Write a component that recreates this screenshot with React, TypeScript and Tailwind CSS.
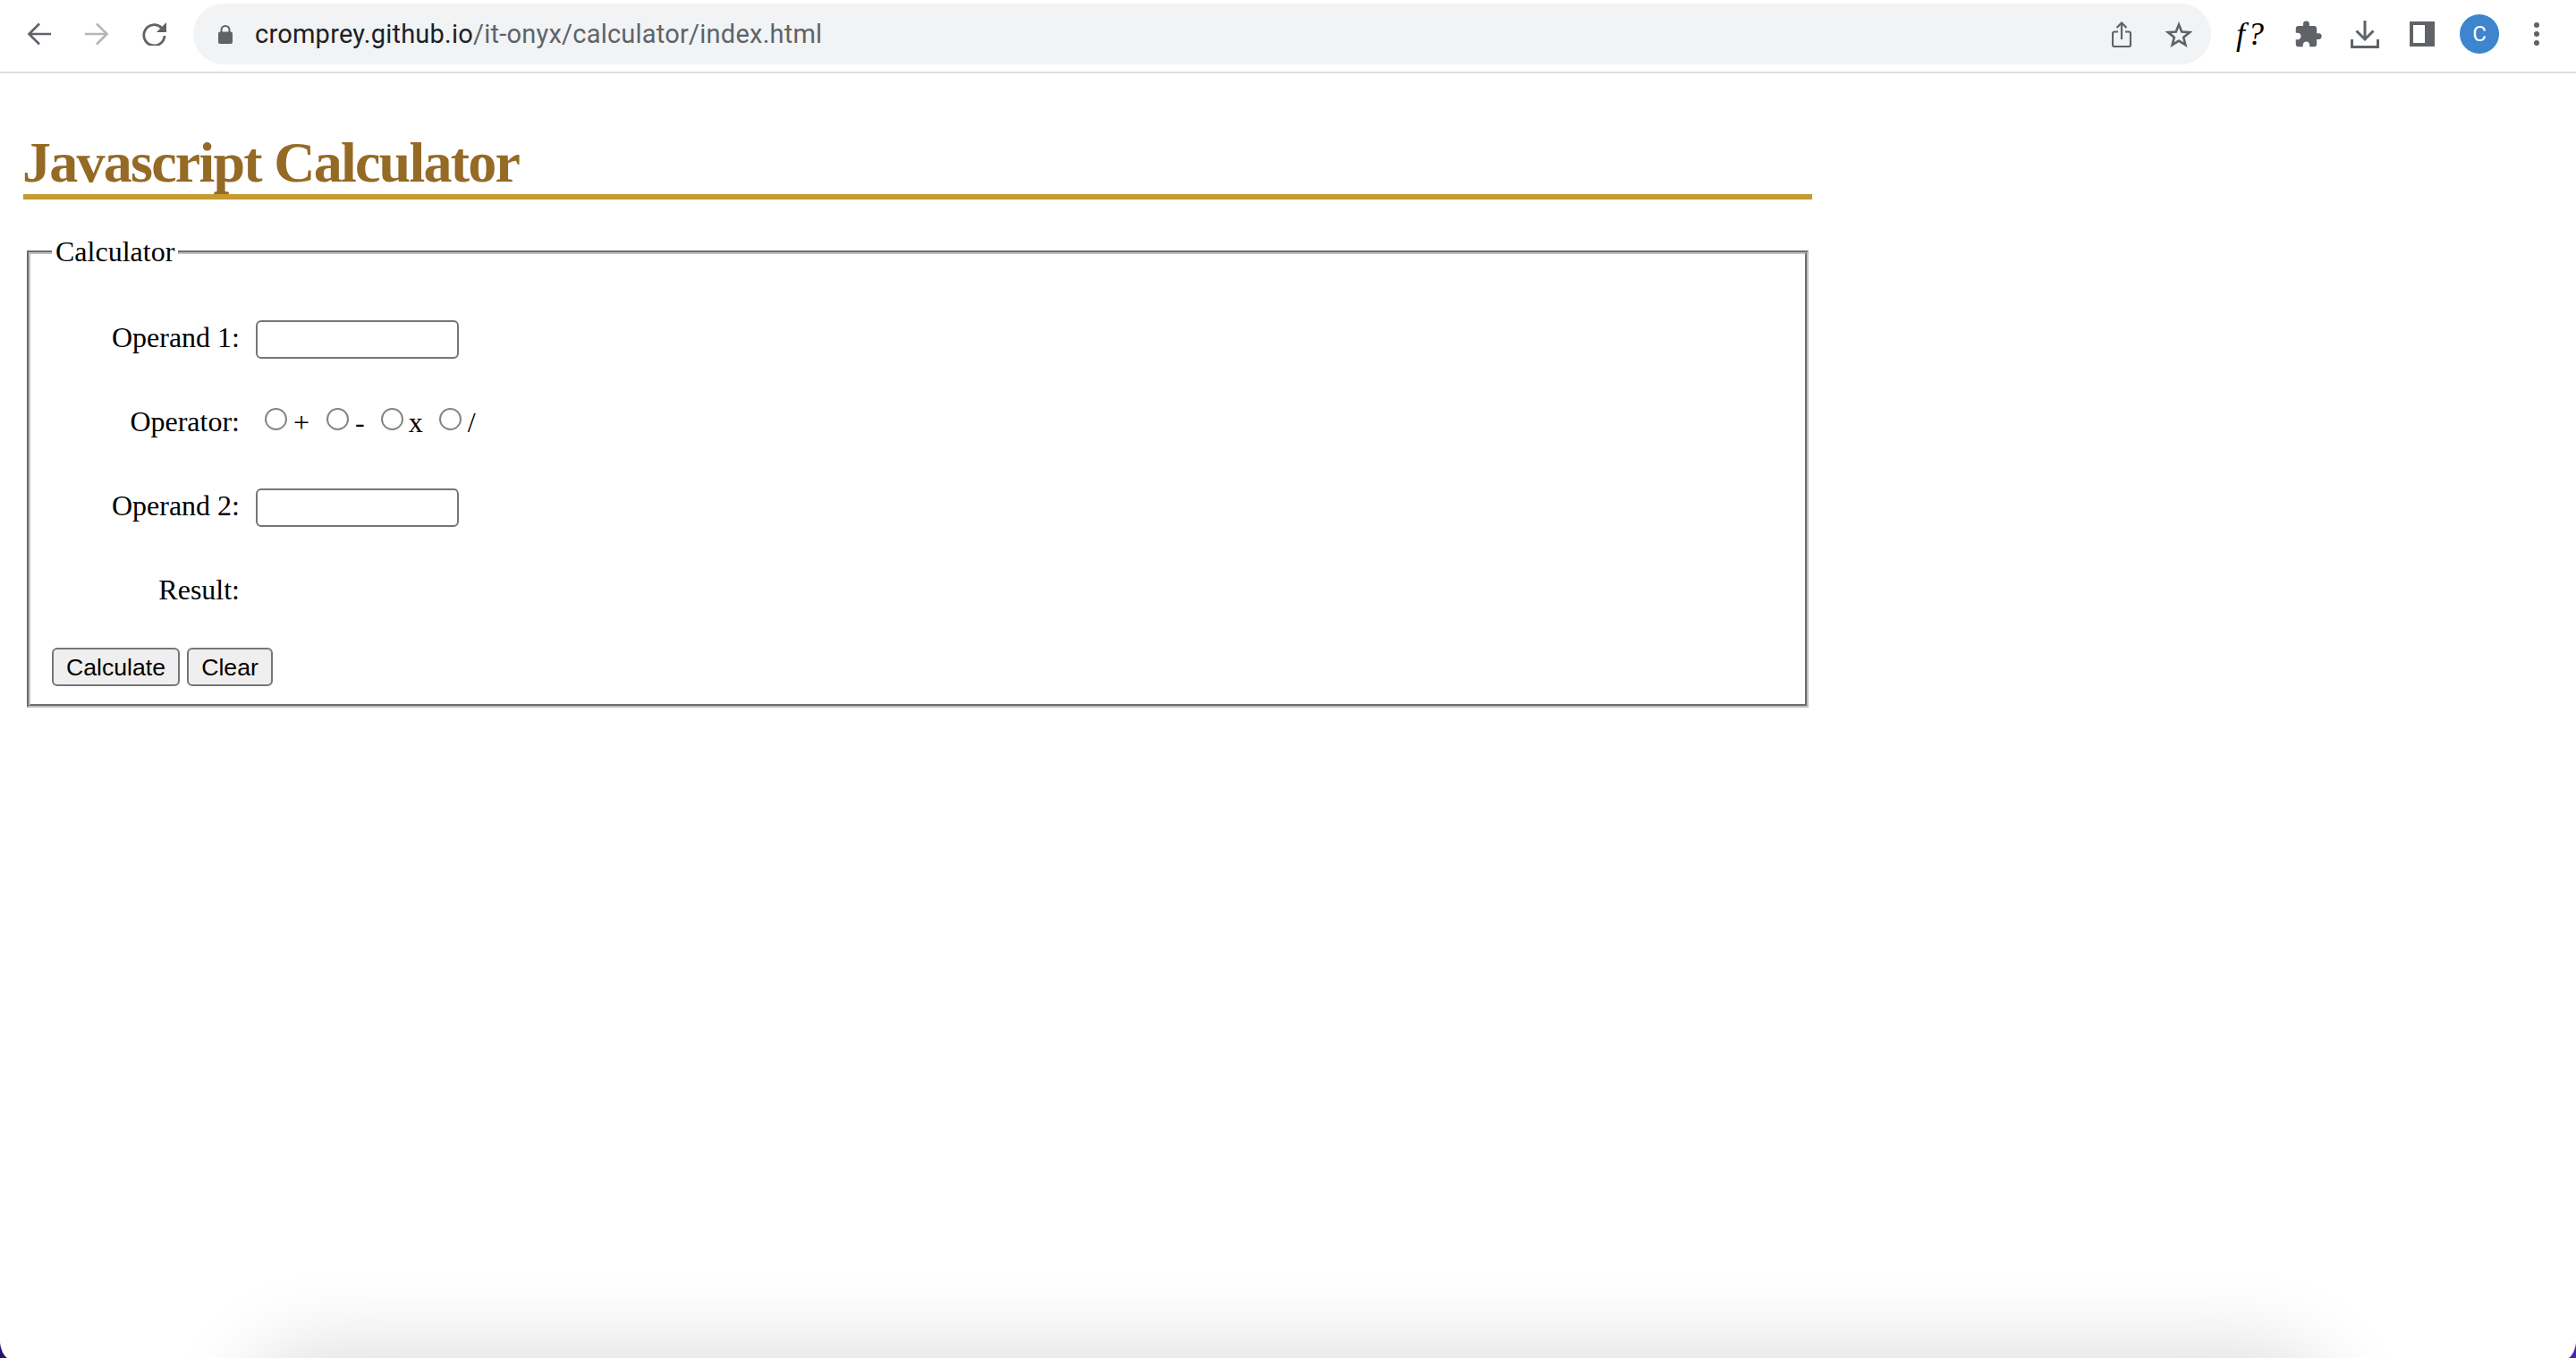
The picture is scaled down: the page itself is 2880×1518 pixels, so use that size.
import React from 'react';
import { MdExtension } from 'react-icons/md';

const operators = [
  { op: '+', cls: 'ml-[10px] mr-[7px]' },
  { op: '-', cls: 'ml-[19px] mr-[7px]' },
  { op: 'x', cls: 'ml-[18px] mr-[6px]' },
  { op: '/', cls: 'ml-[18px] mr-[7px]' },
];

const Toolbar: React.FC = () => {
  return (
    <header className="flex h-[82px] items-center border-b-2 border-[#dfdfdf] pb-1 pl-[30px] bg-white">
      {/* Navigation */}
      <svg className="w-[28px] h-[26px]" viewBox="0 0 28 26" fill="none" stroke="#5f6368" strokeWidth="2.6">
        <path d="M27 13H3M14 1.5 2.5 13 14 24.5" />
      </svg>
      <svg className="ml-[37px] w-[27px] h-[26px]" viewBox="0 0 27 26" fill="none" stroke="#b4b6b9" strokeWidth="2.6">
        <path d="M0 13H24M13 1.5 24.5 13 13 24.5" />
      </svg>
      <svg className="ml-[36px] w-[28px] h-[26px]" viewBox="0 0 28 26" fill="none">
        <path d="M22.5 6A11.6 11.6 0 1 0 26 15" stroke="#5f6368" strokeWidth="2.8" />
        <path d="M28 0V11H17Z" fill="#5f6368" />
      </svg>

      {/* Address bar */}
      <div className="ml-[30px] flex h-[68px] w-[2256px] items-center rounded-[34px] bg-[#f1f3f4] pl-[28px] pr-[21px]">
        <svg className="w-[16px] h-[21px]" viewBox="0 0 16 21">
          <path d="M3.5 8V5.5a4.5 4.5 0 0 1 9 0V8" fill="none" stroke="#5f6368" strokeWidth="2" />
          <rect x="0" y="7.5" width="16" height="13.5" rx="2" fill="#5f6368" />
        </svg>
        <div className="ml-[25px] pt-[1px] font-['Roboto',sans-serif] text-[29px] tracking-[0.23px] text-[#5f6368]">
          <span className="text-[#202124]">cromprey.github.io</span>/it-onyx/calculator/index.html
        </div>
        <svg className="ml-auto w-[22px] h-[29px]" viewBox="0 0 22 29" fill="none" stroke="#5f6368" strokeWidth="2.2">
          <path d="M7 11.5H3a2 2 0 0 0-2 2V26a2 2 0 0 0 2 2h16a2 2 0 0 0 2-2V13.5a2 2 0 0 0-2-2h-4M11 20V2M5.5 7 11 1.5 16.5 7" />
        </svg>
        <svg className="ml-[38px] w-[30px] h-[29px]" viewBox="0 0 30 29" fill="none" stroke="#5f6368" strokeWidth="2.6">
          <path d="M15 3.5 18.2 11.6 27 12.2 20.2 17.8 22.4 26.2 15 21.6 7.6 26.2 9.8 17.8 3 12.2 11.8 11.6Z" />
        </svg>
      </div>

      {/* Extensions and profile */}
      <div className="ml-[28px] w-[33px] font-['Liberation_Serif',serif] text-[36px] italic leading-none tracking-[3px] text-black">f?</div>
      <MdExtension className="ml-[31px] w-[33px] h-[33px] text-[#5f6368]" />
      <svg className="ml-[31px] w-[32px] h-[31px]" viewBox="0 0 32 31" fill="none" stroke="#5f6368" strokeWidth="3">
        <path d="M16 0V21M6.5 11.5 16 21 25.5 11.5M1.5 21V29.5H30.5V21" />
      </svg>
      <svg className="ml-[34px] w-[28px] h-[28px]" viewBox="0 0 28 28">
        <path d="M0 0H28V28H0ZM4 4V24H17V4Z" fill="#5f6368" fillRule="evenodd" />
      </svg>
      <div className="ml-[28px] flex h-[44px] w-[44px] items-center justify-center rounded-full bg-[#3d85cc] font-['Roboto',sans-serif] text-[24px] text-white">
        C
      </div>
      <div className="ml-[39px] flex flex-col gap-[4px]">
        <span className="h-[6px] w-[6px] rounded-full bg-[#5f6368]" />
        <span className="h-[6px] w-[6px] rounded-full bg-[#5f6368]" />
        <span className="h-[6px] w-[6px] rounded-full bg-[#5f6368]" />
      </div>
    </header>
  );
};

const LabelCell: React.FC<{ children: React.ReactNode }> = ({ children }) => (
  <div className="w-[228px] pr-[18px] pb-[4px] text-right">{children}</div>
);

const TextRow: React.FC<{ label: string }> = ({ label }) => (
  <div className="flex h-[42px] items-center">
    <LabelCell>{label}</LabelCell>
    <input
      type="text"
      className="h-[43px] w-[227px] rounded-[6px] border-2 border-[#767676] bg-white"
    />
  </div>
);

const App: React.FC = () => {
  return (
    <div className="relative h-[1518px] w-full overflow-hidden bg-white font-['Liberation_Serif',serif] text-[32px] text-black">
      <Toolbar />

      <h1 className="ml-[26px] mt-[63px] h-[78px] w-[2000px] border-b-[6px] border-[#c49a32] indent-[-1px] text-[64px] font-bold leading-[74px] tracking-[-1.75px] text-[#956a25]">
        Javascript Calculator
      </h1>

      {/* Calculator form */}
      <form>
        <fieldset className="ml-[30px] mt-[41px] w-[1992px] border-4 [border-style:groove] border-[#c0c0c0] px-[24px] pb-[20px] pt-[58px]">
          <legend className="px-[4px] pb-[2px] leading-[34px]">Calculator</legend>
          <div className="flex flex-col gap-[52px]">
            <TextRow label="Operand 1:" />
            <div className="flex h-[42px] items-center">
              <LabelCell>Operator:</LabelCell>
              {operators.map((item) => (
                <label key={item.op} className="flex items-center pb-[3px]">
                  <input
                    type="radio"
                    name="operator"
                    className={`h-[25px] w-[25px] -translate-y-[3px] appearance-none rounded-full border-2 border-[#858585] bg-white ${item.cls}`}
                  />
                  <span>{item.op}</span>
                </label>
              ))}
            </div>
            <TextRow label="Operand 2:" />
            <div className="flex h-[42px] items-center">
              <LabelCell>Result:</LabelCell>
            </div>
          </div>
          <div className="mt-[42px] flex gap-[8px] font-['Liberation_Sans',sans-serif] text-[26.67px]">
            <button type="button" className="h-[43px] w-[143px] rounded-[6px] border-2 border-[#767676] bg-[#efefef] pb-[3px]">
              Calculate
            </button>
            <button type="button" className="h-[43px] w-[96px] rounded-[6px] border-2 border-[#767676] bg-[#efefef] pb-[3px]">
              Clear
            </button>
          </div>
        </fieldset>
      </form>

      {/* Window shadow and desktop corners */}
      <div className="absolute left-[310px] top-[1548px] h-[100px] w-[2260px] rounded-full shadow-[0_0_90px_45px_rgba(0,0,0,0.13)]" />
      <svg className="absolute bottom-0 left-0 h-[17px] w-[8px]" viewBox="0 0 8 17">
        <path d="M0 0C1 8 4 14 8 17H0Z" fill="#2a1272" />
      </svg>
      <svg className="absolute bottom-0 right-0 h-[17px] w-[8px]" viewBox="0 0 8 17">
        <path d="M8 0C7 8 4 14 0 17H8Z" fill="#4c20b4" />
      </svg>
    </div>
  );
};

export default App;
